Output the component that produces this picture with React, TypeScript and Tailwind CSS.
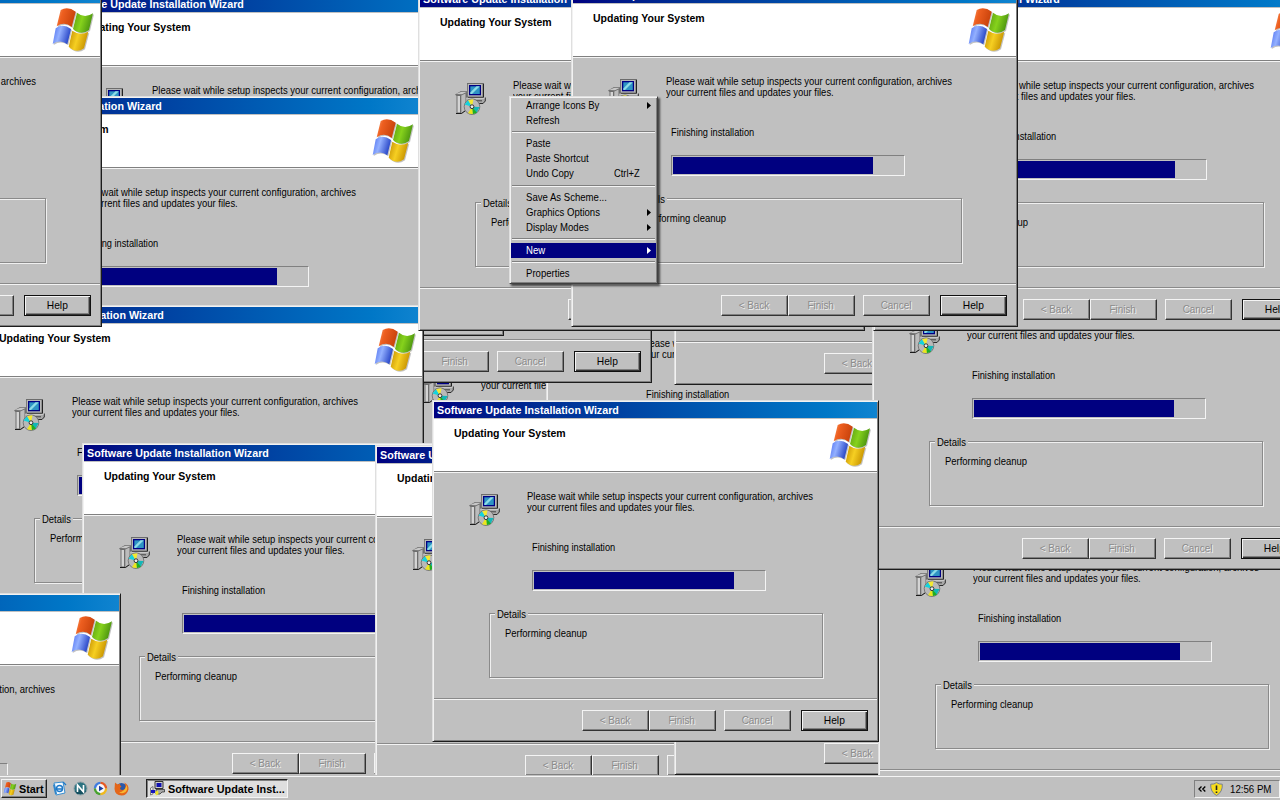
import React from "react";

const SANS = "font-['Liberation_Sans',Arial,sans-serif]";

function Label({ children, className = "scale-x-[0.86]" }: { children: React.ReactNode; className?: string }) {
  return <span className={`inline-block origin-left whitespace-nowrap ${className}`}>{children}</span>;
}

function Bold({ children, className = "scale-x-[0.97]" }: { children: React.ReactNode; className?: string }) {
  return <span className={`inline-block origin-left whitespace-nowrap font-bold ${className}`}>{children}</span>;
}

function Flag({ className = "" }: { className?: string }) {
  return (
    <svg viewBox="0 0 42 45" className={className} aria-hidden="true">
      <defs>
        <linearGradient id="fr" x1="0" x2="1" y1="0" y2="0.3">
          <stop offset="0" stopColor="#f9a06a" />
          <stop offset="0.35" stopColor="#ee5f20" />
          <stop offset="1" stopColor="#c9430c" />
        </linearGradient>
        <linearGradient id="fg" x1="0" x2="1" y1="0" y2="0.3">
          <stop offset="0" stopColor="#5a9a10" />
          <stop offset="0.5" stopColor="#86d21c" />
          <stop offset="1" stopColor="#4b9410" />
        </linearGradient>
        <linearGradient id="fb" x1="0" x2="1" y1="0" y2="0.3">
          <stop offset="0" stopColor="#4a6cf0" />
          <stop offset="0.45" stopColor="#93b0ff" />
          <stop offset="1" stopColor="#2a48c8" />
        </linearGradient>
        <linearGradient id="fy" x1="0" x2="1" y1="0" y2="0.3">
          <stop offset="0" stopColor="#c08a00" />
          <stop offset="0.5" stopColor="#f6cf22" />
          <stop offset="1" stopColor="#c79300" />
        </linearGradient>
      </defs>
      <g fill="#a9a9a9" opacity="0.7" transform="translate(1 1)">
        <path d="M25 4.7Q32.500 11 41 5.300L37 22Q29 28 21 21Z" />
        <path d="M20.300 22.700Q28 28 36.300 23.700L32 40.300Q24 46 16.700 38.700Z" />
        <path d="M8.700 2Q16-2 23.700 3.700L19.700 19Q12.500 13 4.700 18.300Z" />
        <path d="M3.700 20.300Q11 15 19 21L15.300 36.300Q8.300 31 .7 36Z" />
      </g>
      <path fill="url(#fr)" d="M8.700 2Q16-2 23.700 3.700L19.700 19Q12.500 13 4.700 18.300Z" />
      <path fill="url(#fg)" d="M25 4.700Q32.500 11 41 5.300L37 22Q29 28 21 21Z" />
      <path fill="url(#fb)" d="M3.700 20.300Q11 15 19 21L15.300 36.300Q8.300 31 .7 36Z" />
      <path fill="url(#fy)" d="M20.300 22.700Q28 28 36.300 23.700L32 40.300Q24 46 16.700 38.700Z" />
    </svg>
  );
}

function SetupIcon({ className = "" }: { className?: string }) {
  return (
    <svg viewBox="0 0 31 32" className={className} aria-hidden="true">
      <path d="M0 11.500L6 8H13V12L11 27L6 31H1.500V13Z" fill="#6e6e6e" />
      <path d="M1 11L6.500 8.800H12L7 11.300Z" fill="#c8c8c8" />
      <path d="M2.500 13H5V29.500H2.500Z" fill="#d4d4d4" />
      <path d="M6.300 12.500L10.500 10.500V27L6.300 30Z" fill="#bcbcbc" />
      <path d="M1 30.500H6.500L10 28" stroke="#1a1a1a" fill="none" />
      <path d="M12 0H29V14.500H12Z" fill="#6c6c6c" />
      <path d="M12.800 1H27.500V13.500H12.800Z" fill="#b8b8b8" />
      <path d="M14 2H26V12.300H14Z" fill="#000084" />
      <path d="M15.300 3.300H24.800V11H15.300Z" fill="#2e94c4" />
      <path d="M15.300 9.500L21.500 3.300H24.800L17 11H15.300Z" fill="#8cdce6" />
      <path d="M28.500 1V14.500H13" stroke="#222" fill="none" />
      <path d="M11 15.500H30V18.500L28 21H11Z" fill="#a8a8a8" />
      <path d="M11 15.200H30" stroke="#dcdcdc" strokeWidth=".8" />
      <path d="M11 20.500H28L30.300 18V14.500" stroke="#2b2b2b" fill="none" />
      <path d="M19 17.800H27" stroke="#444" />
      <circle cx="17" cy="23.700" r="7.800" fill="#b9b9b9" stroke="#666" strokeWidth=".8" />
      <path d="M17 23.700L9.500 21.500L13 17.200Z" fill="#14d2dc" />
      <path d="M17 23.700L13.200 17L18.500 16.200Z" fill="#f4ea30" />
      <path d="M17 23.700L24.600 24L21.500 30Z" fill="#12b6b8" />
      <path d="M17 23.700L22 29.700L17.500 31.300Z" fill="#1fae22" />
      <path d="M17 23.700L17.800 31.300L13 30.200Z" fill="#ece51c" />
      <circle cx="17" cy="23.700" r="1.900" fill="#eee" stroke="#333" strokeWidth="1" />
    </svg>
  );
}

function PushButton({ label, enabled = false }: { label: string; enabled?: boolean }) {
  const frame = enabled
    ? "border border-[#111] shadow-[inset_1px_1px_0_#f4f4f4,inset_-1px_-1px_0_#333,inset_-2px_-2px_0_#808080]"
    : "border border-t-[#f4f4f4] border-l-[#f4f4f4] border-r-[#333] border-b-[#333] shadow-[inset_-1px_-1px_0_#808080]";
  const ink = enabled ? "scale-x-[0.93] text-black" : "scale-x-[0.9] text-[#8b8b8b] [text-shadow:1px_1px_0_#f0f0f0]";
  return (
    <div className={`flex h-[21px] w-[67px] items-center justify-center pr-px pb-px ${frame}`}>
      <span className={`whitespace-nowrap leading-[12px] ${ink}`}>{label}</span>
    </div>
  );
}

function Wizard({ x, y }: { x: number; y: number }) {
  return (
    <section
      style={{ left: x, top: y }}
      className="absolute flex h-[342px] w-[447px] flex-col border border-t-[#dfdfdf] border-l-[#dfdfdf] border-r-[#1c1c1c] border-b-[#1c1c1c] bg-[#c0c0c0] p-px shadow-[inset_1px_1px_0_#f2f2f2,inset_-1px_-1px_0_#808080]"
    >
      <div className="flex h-[16px] shrink-0 items-center bg-linear-to-r from-[#000080] to-[#1084d0] pl-[3px]">
        <Bold className="scale-x-[0.973] leading-[12px] text-white">Software Update Installation Wizard</Bold>
      </div>
      <header className="mt-px flex h-[52px] shrink-0 justify-between bg-white pt-[4px] pr-[6px] pl-[20px]">
        <Bold className="mt-[4px] h-[12px] scale-x-[0.955] leading-[12px]">Updating Your System</Bold>
        <Flag className="h-[45px] w-[42px]" />
      </header>
      <div className="h-[2px] shrink-0 border-t border-b border-t-[#808080] border-b-[#f4f4f4]" />
      <div className="flex h-[140px] shrink-0 pl-[35px]">
        <SetupIcon className="mt-[21px] h-[32px] w-[31px] shrink-0" />
        <div className="flex flex-col pt-[17px] pl-[27px]">
          <div className="flex h-[24px] flex-col">
            <Label className="h-[11px] scale-x-[0.86] leading-[12px]">Please wait while setup inspects your current configuration, archives</Label>
            <Label className="h-[12px] scale-x-[0.86] leading-[12px]">your current files and updates your files.</Label>
          </div>
          <div className="mt-[27px] ml-[5px] h-[12px] leading-[12px]">
            <Label className="scale-x-[0.84]">Finishing installation</Label>
          </div>
          <div className="mt-[17px] ml-[5px] h-[21px] w-[234px] border border-t-[#808080] border-l-[#808080] border-r-[#f4f4f4] border-b-[#f4f4f4] p-px">
            <div className="h-[17px] w-[200px] bg-[#000080]" />
          </div>
        </div>
      </div>
      <div className="ml-[55px] h-[65px] w-[334px] shrink-0 border border-[#8a8a8a] shadow-[1px_1px_0_#f0f0f0,inset_1px_1px_0_#f0f0f0]">
        <div className="-mt-[6px] ml-[5px] flex h-[12px] w-[33px] bg-[#c0c0c0] pl-[2px] leading-[12px]">
          <Label>Details</Label>
        </div>
        <div className="mt-[7px] ml-[15px] leading-[12px]">
          <Label>Performing cleanup</Label>
        </div>
      </div>
      <div className="mt-[20px] h-[2px] shrink-0 border-t border-b border-t-[#8a8a8a] border-b-[#f4f4f4]" />
      <footer className="flex pt-[10px] pl-[148px]">
        <PushButton label="< Back" />
        <PushButton label="Finish" />
        <div className="ml-[8px]"><PushButton label="Cancel" /></div>
        <div className="ml-[10px]"><PushButton label="Help" enabled /></div>
      </footer>
    </section>
  );
}

// Back-to-front stacking order.
const WINDOWS: [number, number][] = [
  [386, 278], [546, 247], [674, 43], [205, 41], [57, -6], [-25, 96], [-23, 305], [418, -11],
  [82, 443], [375, 445], [-326, 593], [674, 433], [878, 471], [872, 228], [873, -11],
  [-345, -15], [571, -15], [432, 400],
];

function MenuItem({ label, hint, sub, active }: { label: string; hint?: string; sub?: boolean; active?: boolean }) {
  return (
    <div className={`flex h-[15.120px] items-center pr-[5px] pb-px pl-[15px] leading-[12px] ${active ? "bg-[#000080] text-white" : "text-black"}`}>
      <span className="flex-1"><Label className="scale-x-[0.87]">{label}</Label></span>
      {hint && <Label className="mr-[7px] scale-x-[0.85]">{hint}</Label>}
      {sub && (
        <svg viewBox="0 0 4 7" className="mt-px h-[7px] w-[4px]"><path d="M0 0L4 3.500L0 7Z" fill="currentColor" /></svg>
      )}
    </div>
  );
}

function Divider() {
  return <div className="mx-px my-[3px] h-[2px] border-t border-b border-t-[#808080] border-b-[#f4f4f4]" />;
}

function ContextMenu() {
  return (
    <div className="absolute top-[96px] left-[509px] h-[188px] w-[149px] border border-t-[#dfdfdf] border-l-[#dfdfdf] border-r-[#404040] border-b-[#404040] bg-[#c0c0c0] p-px shadow-[inset_1px_1px_0_#f2f2f2,inset_-1px_-1px_0_#808080,2px_2px_2px_rgba(0,0,0,0.65)]">
      <MenuItem label="Arrange Icons By" sub />
      <MenuItem label="Refresh" />
      <Divider />
      <MenuItem label="Paste" />
      <MenuItem label="Paste Shortcut" />
      <MenuItem label="Undo Copy" hint="Ctrl+Z" />
      <Divider />
      <MenuItem label="Save As Scheme..." />
      <MenuItem label="Graphics Options" sub />
      <MenuItem label="Display Modes" sub />
      <Divider />
      <MenuItem label="New" sub active />
      <Divider />
      <MenuItem label="Properties" />
    </div>
  );
}

function QuickLaunch() {
  return (
    <div className="flex items-center gap-[5.500px]">
      <svg viewBox="0 0 15 15" className="h-[15px] w-[15px]">
        <path d="M2 2L11 1L13 12L4 14Z" fill="#f4faff" stroke="#3a8fd0" />
        <path d="M1 4L3 3L5 13L3 13Z" fill="#2f86cc" />
        <circle cx="7.500" cy="7.500" r="3" fill="none" stroke="#1c78c8" strokeWidth="1.500" />
        <path d="M5 8H10M11 1L14 4" stroke="#1c78c8" strokeWidth="1.300" />
      </svg>
      <svg viewBox="0 0 15 15" className="h-[15px] w-[15px]">
        <circle cx="7.500" cy="7.500" r="6.500" fill="#2c7280" stroke="#8b9ea4" />
        <path d="M2 10Q7 8 13 10L11 13H4Z" fill="#155060" />
        <path d="M4.500 11V4L10.500 11V4" fill="none" stroke="#fff" strokeWidth="1.600" />
      </svg>
      <svg viewBox="0 0 15 15" className="h-[15px] w-[15px]">
        <path d="M7.500 7.500V.8A6.700 6.700 0 0 0 .8 7.500Z" fill="#3f7ce0" />
        <path d="M7.500 7.500V.8A6.700 6.700 0 0 1 14.200 7.500Z" fill="#e65a23" />
        <path d="M7.500 7.500H.8A6.700 6.700 0 0 0 7.500 14.200Z" fill="#48a22f" />
        <path d="M7.500 7.500H14.200A6.700 6.700 0 0 1 7.500 14.200Z" fill="#f0b91e" />
        <circle cx="7.500" cy="7.500" r="4.400" fill="#f6f6fa" />
        <path d="M6 4.700L10.500 7.500L6 10.300Z" fill="#1b3f9c" />
      </svg>
      <svg viewBox="0 0 15 15" className="h-[15px] w-[15px]">
        <circle cx="7.500" cy="7.500" r="5.500" fill="#2b58a8" />
        <path d="M1 1.500L3.500 3.500L6 2.800Q5.500 4.500 7.500 5.500Q6 6.500 6 7.500Q7 9.500 9 9Q11.500 8 11.500 5.500Q11.500 3 10 1.500Q15 3.500 14.500 8.500Q13 14.500 7.500 14.500Q1 14 .5 8Z" fill="#e4661a" />
        <path d="M12.500 4Q14.500 8 11.500 11Q9 13 5 11.500Q11 11 12.500 4Z" fill="#f8b830" />
      </svg>
    </div>
  );
}

function TaskIcon() {
  return (
    <svg viewBox="0 0 15 15" className="h-[15px] w-[15px] shrink-0" aria-hidden="true">
      <path d="M5 .5H13V7.500H5Z" fill="#cfcfcf" stroke="#333" />
      <path d="M6.500 2H11.500V6H6.500Z" fill="#1010b0" />
      <path d="M6 8.500H14.500V11H12L10 13H6Z" fill="#a8a8a8" stroke="#333" strokeWidth=".8" />
      <path d="M.5 7L3 5.500V13L.5 14Z" fill="#e8e8e8" stroke="#555" strokeWidth=".7" />
      <path d="M1 9H5V12H1Z" fill="#1414c0" />
      <path d="M5 11L8 9.500L8.500 13L6 14.500Z" fill="#f0e428" />
    </svg>
  );
}

function Taskbar() {
  return (
    <footer className="mt-px flex h-[24px] shrink-0 items-center border-t border-t-[#f4f4f4] bg-[#c0c0c0] pl-px">
      <div className="flex h-[19px] w-[46px] shrink-0 items-center border border-t-[#f4f4f4] border-l-[#f4f4f4] border-r-[#222] border-b-[#222] pl-px shadow-[inset_-1px_-1px_0_#808080]">
        <Flag className="h-[14px] w-[14px] shrink-0" />
        <Bold className="ml-[2px] scale-x-[0.98]">Start</Bold>
      </div>
      <div className="flex w-[99px] shrink-0 pl-[5px]"><QuickLaunch /></div>
      <div className="flex h-[19px] w-[142px] shrink-0 items-center border border-t-[#222] border-l-[#222] border-r-[#f4f4f4] border-b-[#f4f4f4] bg-[#dedede] pl-[3px] shadow-[inset_1px_1px_0_#808080]">
        <TaskIcon />
        <Bold className="ml-[3px] scale-x-[0.985]">Software Update Inst...</Bold>
      </div>
      <div className="ml-auto flex h-[18px] w-[86px] items-center border border-t-[#808080] border-l-[#808080] border-r-[#f4f4f4] border-b-[#f4f4f4] pl-[3px]">
        <svg viewBox="0 0 8 6" className="h-[6px] w-[8px]"><path d="M3.500 .5L1 3L3.500 5.500M7.300 .5L4.800 3L7.300 5.500" fill="none" stroke="#000" strokeWidth="1.300" /></svg>
        <svg viewBox="0 0 13 14" className="ml-[4px] h-[14px] w-[13px]">
          <path d="M6.500 .6Q9 2.500 12.300 2.200Q12.800 10 6.500 13.500Q.2 10 .7 2.200Q4 2.500 6.500 .6Z" fill="#f7dc1c" stroke="#777f96" />
          <path d="M6.500 3.500V8M6.500 9.500V11" stroke="#222" strokeWidth="1.600" />
        </svg>
        <Label className="ml-[7px] scale-x-[0.88]">12:56 PM</Label>
      </div>
    </footer>
  );
}

export default function App() {
  return (
    <main className={`relative flex h-[800px] w-[1280px] flex-col overflow-hidden bg-[#c0c0c0] text-[11px] leading-[12px] text-black ${SANS}`}>
      <div className="relative h-[775px] shrink-0 overflow-hidden">
        {WINDOWS.map(([x, y]) => (
          <Wizard key={`${x},${y}`} x={x} y={y} />
        ))}
        <ContextMenu />
      </div>
      <Taskbar />
    </main>
  );
}
